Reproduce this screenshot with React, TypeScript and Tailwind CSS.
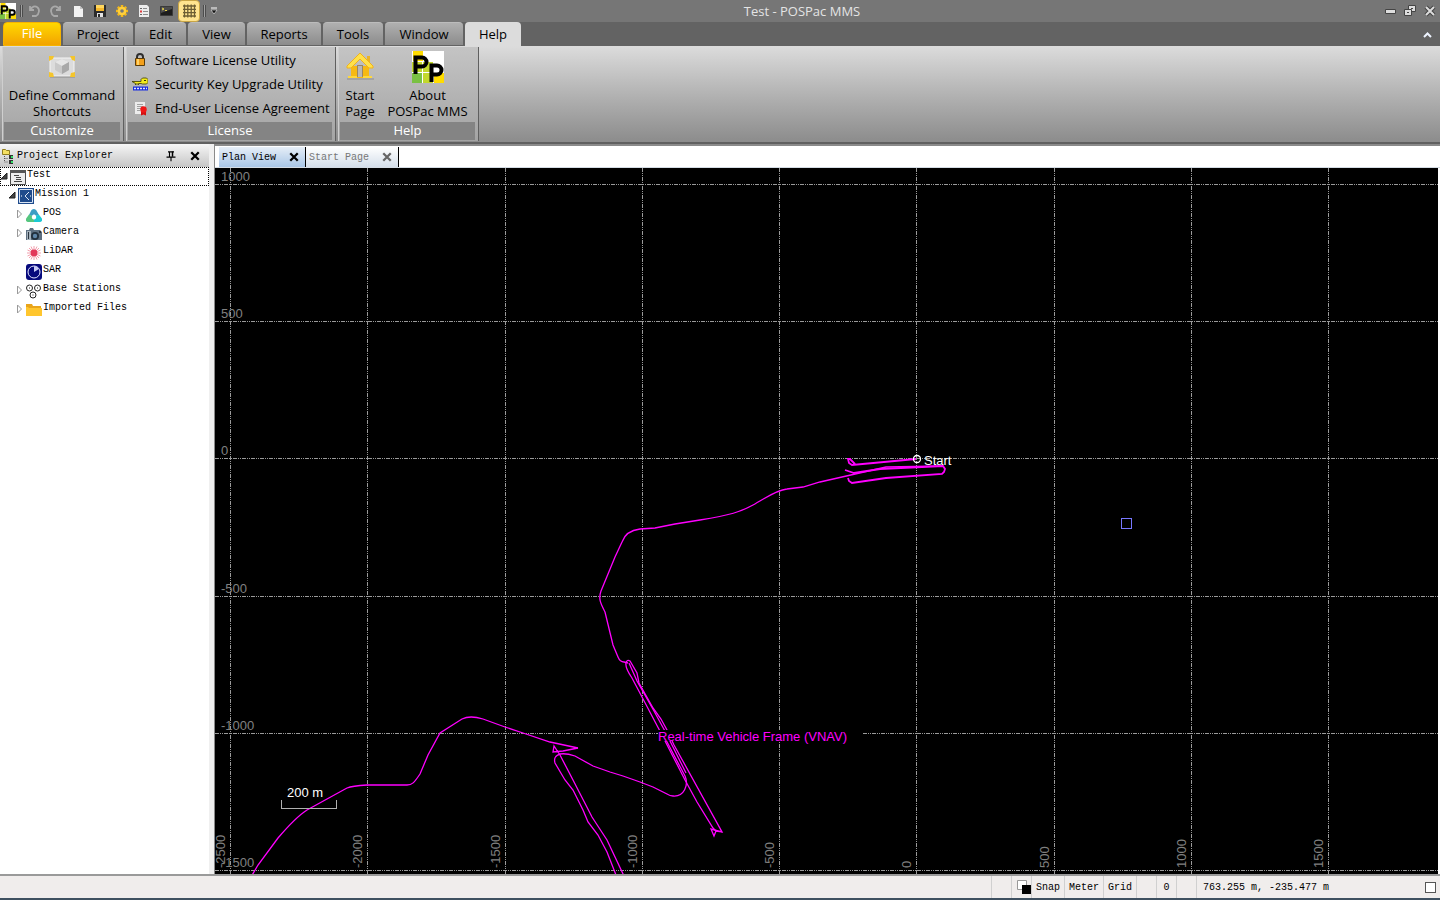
import type { ReactNode } from 'react'

const ribbonFont = "font-['Open_Sans','Noto_Sans',sans-serif]"
const monoFont = "font-['Liberation_Mono',monospace]"

const ribbonTabs = [
  { name: 'Project', width: 'w-[70px]' },
  { name: 'Edit', width: 'w-[51px]' },
  { name: 'View', width: 'w-[57px]' },
  { name: 'Reports', width: 'w-[74px]' },
  { name: 'Tools', width: 'w-[60px]' },
  { name: 'Window', width: 'w-[78px]' },
]

/* ---------- icons ---------- */

function Icon({ children, size = 16 }: { children: ReactNode; size?: number }) {
  return (
    <svg width={size} height={size} viewBox="0 0 16 16" fill="none" className="shrink-0" aria-hidden>
      {children}
    </svg>
  )
}

function LogoIcon({ size = 16 }: { size?: number }) {
  return (
    <svg width={size} height={size} viewBox="0 0 32 32" className="shrink-0" aria-hidden>
      <rect width="32" height="32" fill="#fff" />
      <path d="M1 0h10v10H1zM22 22h10v10H22z" fill="#ffdc00" />
      <path d="M0 11h10v10H0zM11 11h10v10H11zM11 22h10v10H11z" fill="#c3d82c" />
      <path d="M0 22h10v10H0z" fill="#7ac143" />
      <g fill="none" stroke="#000" strokeWidth="4">
        <path d="M3.5 23V6.5H10a4.5 4.5 0 0 1 0 9H4" />
        <path d="M19.500 31V14.500H25a4.500 4.500 0 0 1 0 9h-5" />
      </g>
    </svg>
  )
}

const UndoIcon = () => (
  <Icon>
    <path d="M4 3v4h4M4.500 6.500C6 3.500 9 2.500 11 4c3 2 2.500 7-1 9H6" stroke="#a9a9a9" strokeWidth="1.800" />
  </Icon>
)

const RedoIcon = () => (
  <Icon>
    <path d="M12 3v4H8M11.500 6.500C10 3.500 7 2.500 5 4c-3 2-2.500 7 1 9h4" stroke="#a9a9a9" strokeWidth="1.800" />
  </Icon>
)

const NewIcon = () => (
  <Icon>
    <path d="M4 3h6l3 3v8H4z" fill="#f2f2f2" />
    <path d="M10 3v3h3z" fill="#c4c4c4" />
  </Icon>
)

const SaveIcon = () => (
  <Icon>
    <path d="M2 2h12v12H2z" fill="#2b2b2b" />
    <path d="M4 2h8v6H4z" fill="#ffd75e" />
    <path d="M4 5h8v3H4z" fill="#f6b72c" />
    <path d="M5 10h6v4H5z" fill="#e4e4e4" />
    <path d="M6 11h2v3H6z" fill="#2b2b2b" />
  </Icon>
)

const GearIcon = () => (
  <Icon>
    <g stroke="#f3b81a" strokeWidth="2.500">
      <path d="M8 2v12M2 8h12M3.800 3.800l8.400 8.400M12.200 3.800l-8.400 8.400" />
    </g>
    <circle cx="8" cy="8" r="4.300" fill="#ffd03c" />
    <circle cx="8" cy="8" r="1.800" fill="#777" />
  </Icon>
)

const ReportIcon = () => (
  <Icon>
    <path d="M3 2h8l2 2v10H3z" fill="#ededed" />
    <path d="M7 5.500h4M7 8.500h5M7 11.500h5" stroke="#8c8c8c" />
    <path d="M4 5.500h2M4 11.500h2" stroke="#666" />
    <path d="M4 8.500h2" stroke="#e04040" strokeWidth="2" />
  </Icon>
)

const ConsoleIcon = () => (
  <Icon>
    <path d="M2.500 3.500h12v9h-12z" fill="#1d1d1d" stroke="#3a3a3a" />
    <path d="M3 4h11v2L3 10z" fill="#4c4c4c" />
    <path d="M4 5l2 1-2 1M7 7.500h2" stroke="#e7d34c" />
  </Icon>
)

const GridIcon = () => (
  <Icon>
    <path
      d="M3.500 1.500v13M6.800 1.500v13M10.200 1.500v13M13.500 1.500v13M2 3h13M2 6.300h13M2 9.700h13M2 13h13"
      stroke="#6d5e33"
      strokeWidth="1.300"
    />
  </Icon>
)

const ShortcutsIcon = () => (
  <svg width="32" height="32" viewBox="0 0 32 32" aria-hidden>
    <path d="M4 25.500h25" stroke="#8b8b8b" strokeWidth="2" />
    <path d="M4 7h24v18H4z" fill="#dcdcdc" stroke="#f4f4f4" />
    <path d="M16 8l7 3v8l-7 4-7-4v-8z" fill="#c9c9c9" />
    <path d="M16 8l7 3-7 4-7-4z" fill="#e6e6e6" />
    <path d="M16 15l7-4v8l-7 4z" fill="#a9a9a9" />
    <path d="M3 10V5h5l-1 3zM24 5h5v5l-3-1zM3 21l4 1 1 4H3zM29 21v5h-5l1-4z" fill="#f4c52c" />
  </svg>
)

const HomeIcon = () => (
  <svg width="32" height="32" viewBox="0 0 32 32" aria-hidden>
    <path d="M3 28h27" stroke="#8f8f8f" />
    <path d="M7 15h18v12H7z" fill="#f7b913" />
    <path d="M23 5h3v7h-3z" fill="#e9b32a" />
    <path d="M16 2L3 15v2h4l9-9 9 9h4v-2z" fill="#ffe14a" stroke="#f0b21c" />
    <path d="M13 14h6v12h-6z" fill="#9b8663" />
    <path d="M14 15h4v11h-4z" fill="#b8b8b8" />
    <path d="M4 26h9M19 26h9" stroke="#ffd83c" strokeWidth="2" />
  </svg>
)

const LockIcon = () => (
  <Icon>
    <path d="M5 8V5a3 3 0 0 1 6 0v3" stroke="#2e2e2e" strokeWidth="2" />
    <path d="M3.500 6.500h9v7h-9z" fill="#f3a01b" stroke="#5a3d0b" />
    <path d="M5 7h2v6H5z" fill="#ffd36b" />
  </Icon>
)

const KeyIcon = () => (
  <Icon>
    <path
      d="M0 5.500h9V3.500L10.500 2h4L16 3.500v3L14.500 8h-4L9 7.500H6.500V9L5 7.500 3.500 9V7.500z"
      fill="#f2ea1c"
      stroke="#3c3a00"
      strokeWidth=".8"
    />
    <path d="M12 4.500h2" stroke="#3c3a00" />
    <path d="M1 10.500h15v4H1z" fill="#1a2ee0" />
    <path d="M2 12.500h13" stroke="#dfe3ff" strokeWidth="1.500" strokeDasharray="2 1" />
  </Icon>
)

const LicenseIcon = () => (
  <Icon>
    <path d="M3 2h10v12H3z" fill="#ececec" />
    <path d="M5 4.500h6M5 6.500h6M5 8.500h4M5 10.500h3" stroke="#a2a2a2" />
    <path d="M9 11h5v4.500l-2.500-1-2.500 1z" fill="#d31010" />
    <circle cx="11.500" cy="9.500" r="3.200" fill="#f01818" />
  </Icon>
)

const ExplorerIcon = () => (
  <Icon>
    <path d="M2.500 1.500h3l1 1h3v4h-7z" fill="#f5e063" stroke="#8f7d1e" />
    <path d="M4.500 8v6H8M4.500 10.500H8" stroke="#555" strokeDasharray="1 1" />
    <path d="M9 7h4v4H9zM9 12h4v4H9z" fill="#333" />
    <path d="M11 8h2v2h-2zM11 13h2v2h-2z" fill="#35e06a" />
  </Icon>
)

const ProjectIcon = () => (
  <Icon>
    <path d="M.5 1.500h15v14H.5z" fill="#ececec" stroke="#4a4a4a" />
    <path d="M0 1h16v3H0z" fill="#555" />
    <path d="M4 6.500h5M6 8.500h5M6 10.500h5M4 12.500h8" stroke="#444" />
  </Icon>
)

const MissionIcon = () => (
  <Icon>
    <path d="M0 0h16v16H0z" fill="#1f4b8c" />
    <path d="M1.500 1.500h13v13h-13z" stroke="#dbe5f4" />
    <path d="M11 4L7 8l4 4" stroke="#dbe5f4" />
    <path d="M3 8h1M12 8h1" stroke="#fff" />
  </Icon>
)

const PosIcon = () => (
  <Icon>
    <path d="M4.500 5C5.500 1 10 1 11 4.500L13 8l-3 1c-1-2-3-2-4 0L3 8z" fill="#3c9fc4" />
    <path d="M3 7.500L6 9c-.5 2 0 3 2 3.500V15H3c-3 0-4-2-2.500-4z" fill="#56c67f" />
    <path d="M12.800 7.500L10 9c.5 2 0 3-2 3.500V15h5c3 0 4-2 2.500-4z" fill="#1cc8d4" />
  </Icon>
)

const CameraIcon = () => (
  <Icon>
    <path d="M0 4h3l1-2h3l1 2h6l2 2v8H0z" fill="#5d6f80" />
    <path d="M1 5h4v9H1z" fill="#a6b2bc" />
    <path d="M2 6h1v7H2zM13 5h2v2h-2z" fill="#2b3640" />
    <circle cx="9" cy="10" r="4" fill="#22303d" />
    <circle cx="9" cy="10" r="2.200" fill="#5f86a8" />
  </Icon>
)

const LidarIcon = () => (
  <Icon>
    <path
      d="M8 1v14M1 8h14M3 3l10 10M13 3L3 13M5 1.500l6 13M11 1.500l-6 13M1.500 5l13 6M14.500 5l-13 6"
      stroke="#f2a0ae"
    />
    <circle cx="8" cy="8" r="3.400" fill="#e2385a" />
  </Icon>
)

const SarIcon = () => (
  <Icon>
    <rect width="16" height="16" rx="3" fill="#070a7c" />
    <circle cx="8" cy="8" r="6" stroke="#e4e6ff" />
    <path d="M8 8V2a6 6 0 0 1 5 3z" fill="#c7cbf5" />
  </Icon>
)

const StationsIcon = () => (
  <Icon>
    <g stroke="#222">
      <circle cx="3.500" cy="5" r="3" />
      <circle cx="11.500" cy="5" r="3" />
      <circle cx="7" cy="12" r="3" />
    </g>
    <path d="M3 4.500h1v1H3zM11 4.500h1v1h-1zM6.500 11.500h1v1h-1z" fill="#222" />
  </Icon>
)

const FolderIcon = () => (
  <Icon>
    <path d="M0 2h6l1 2h8v2H0z" fill="#e9a51b" />
    <path d="M0 5h2l1 1h13v8H0z" fill="#ffc62e" />
  </Icon>
)

const PinIcon = () => (
  <Icon size={12}>
    <path d="M4 2.500h8M6 2v7M2 9.500h12M8 10v5" stroke="#000" strokeWidth="1.500" />
    <path d="M9 2h2v7H9z" fill="#000" />
  </Icon>
)

const CloseIcon = ({ color = '#000' }: { color?: string }) => (
  <Icon size={12}>
    <path d="M3 3l10 10M13 3L3 13" stroke={color} strokeWidth="3" />
  </Icon>
)

/* ---------- title bar and ribbon ---------- */

function QuickAccess() {
  const tools = [
    { name: 'Undo', icon: <UndoIcon /> },
    { name: 'Redo', icon: <RedoIcon /> },
    { name: 'New', icon: <NewIcon /> },
    { name: 'Save', icon: <SaveIcon /> },
    { name: 'Options', icon: <GearIcon /> },
    { name: 'Report', icon: <ReportIcon /> },
    { name: 'Console', icon: <ConsoleIcon /> },
  ]

  return (
    <div className="flex w-[224px] items-center">
      <LogoIcon />
      <span className="ml-1 h-3 w-[3px] border-x border-x-[#4c4c4c] bg-[#a0a0a0]" />
      <div className="ml-[3px] flex items-center gap-[6px]">
        {tools.map((t) => (
          <button key={t.name} aria-label={t.name}>{t.icon}</button>
        ))}
      </div>
      <button
        aria-label="Grid"
        className="ml-1 flex h-[22px] w-[22px] items-center justify-center rounded-sm border border-[#c9a545] bg-[#ffe48f]"
      >
        <GridIcon />
      </button>
      <span className="ml-[3px] h-3 w-[3px] border-x border-x-[#4c4c4c] bg-[#a0a0a0]" />
      <button aria-label="Customize toolbar" className="ml-1">
        <svg width="8" height="8" viewBox="0 0 8 8" aria-hidden>
          <path d="M1 1h6" stroke="#fff" />
          <path d="M1 3h6L4 7z" fill="#111" stroke="#eee" strokeWidth=".6" />
        </svg>
      </button>
    </div>
  )
}

function TitleBar() {
  return (
    <header className="flex h-[22px] items-center bg-[#767676]">
      <QuickAccess />
      <h1 className="flex-1 text-center text-[13px] leading-5 text-[#e4e4e4]">Test - POSPac MMS</h1>
      <div className="flex w-[60px] items-center justify-end gap-2 pr-1">
        <button aria-label="Minimize">
          <svg width="11" height="12" viewBox="0 0 11 12" aria-hidden>
            <path d="M.5 4.500h10v4H.5z" fill="#ddd" stroke="#444" />
          </svg>
        </button>
        <button aria-label="Restore">
          <svg width="12" height="12" viewBox="0 0 12 12" aria-hidden>
            <path d="M4.500.5h7v6h-7z" fill="#ddd" stroke="#444" />
            <path d="M7 3h2v1H7z" fill="#444" />
            <path d="M.5 4.500h7v6h-7z" fill="#ddd" stroke="#444" />
            <path d="M3 7h2v1H3z" fill="#444" />
          </svg>
        </button>
        <button aria-label="Close">
          <svg width="12" height="12" viewBox="0 0 12 12" aria-hidden>
            <path d="M2 2l8 8M10 2l-8 8" stroke="#444" strokeWidth="4" />
            <path d="M2 2l8 8M10 2l-8 8" stroke="#ddd" strokeWidth="2" />
          </svg>
        </button>
      </div>
    </header>
  )
}

function RibbonTabs() {
  return (
    <nav className="flex h-6 items-stretch gap-[2px] bg-[#636363] pl-[3px] text-[13px] text-black">
      <button className="w-[58px] rounded-t-sm border border-[#f6b400] bg-gradient-to-b from-[#ffd800] to-[#f2a300] text-white">
        File
      </button>
      {ribbonTabs.map((t) => (
        <button
          key={t.name}
          className={`${t.width} mb-px rounded-t-sm border-t border-[#bcbcbc] bg-gradient-to-b from-[#b0b0b0] to-[#8c8c8c] pt-px`}
        >
          {t.name}
        </button>
      ))}
      <button className="w-[56px] rounded-t-sm bg-[#dcdcdc] pt-px">Help</button>
      <button aria-label="Collapse ribbon" className="mr-2 ml-auto">
        <svg width="9" height="9" viewBox="0 0 9 9" fill="none" aria-hidden>
          <path d="M1 7l3.500-3.500L8 7" stroke="#eef4ff" strokeWidth="2" />
        </svg>
      </button>
    </nav>
  )
}

function RibbonGroup({ title, width, children }: { title: string; width: string; children: ReactNode }) {
  return (
    <section
      className={`${width} mr-[2px] flex flex-col border-x border-r-[#5f5f5f] border-l-[#cfcfcf] bg-gradient-to-b from-[#c4c4c4] via-[#b4b4b4] to-[#a4a4a4] pr-[3px] pb-px pl-px`}
    >
      <div className="flex flex-1">{children}</div>
      <h2 className="h-[18px] bg-[#848484] text-center leading-[17px] text-white">{title}</h2>
    </section>
  )
}

function Ribbon() {
  const licenseItems = [
    { name: 'Software License Utility', icon: <LockIcon /> },
    { name: 'Security Key Upgrade Utility', icon: <KeyIcon /> },
    { name: 'End-User License Agreement', icon: <LicenseIcon /> },
  ]

  return (
    <div className="flex h-[98px] border-b-2 border-b-[#606060] bg-gradient-to-b from-[#dcdcdc] to-[#8c8c8c] pt-px pb-px pl-[2px] text-[13px] leading-4 text-black">
      <RibbonGroup title="Customize" width="w-[122px]">
        <button className="flex flex-1 flex-col items-center pt-1">
          <ShortcutsIcon />
          <span className="pt-1">
            Define Command
            <br />
            Shortcuts
          </span>
        </button>
      </RibbonGroup>
      <RibbonGroup title="License" width="w-[210px]">
        <div className="flex flex-1 flex-col pt-px pl-1">
          {licenseItems.map((item) => (
            <button key={item.name} className="flex h-6 items-center gap-[7px] whitespace-nowrap">
              {item.icon}
              {item.name}
            </button>
          ))}
        </div>
      </RibbonGroup>
      <RibbonGroup title="Help" width="w-[141px]">
        <button className="flex w-10 flex-col items-center pt-1">
          <HomeIcon />
          <span className="pt-1">
            Start
            <br />
            Page
          </span>
        </button>
        <button className="flex flex-1 flex-col items-center whitespace-nowrap pt-1">
          <LogoIcon size={32} />
          <span className="pt-1">
            About
            <br />
            POSPac MMS
          </span>
        </button>
      </RibbonGroup>
    </div>
  )
}

/* ---------- project explorer ---------- */

type TreeRow = { name: string; indent: string; icon: ReactNode; arrow?: 'open' | 'closed' }

const treeRows: TreeRow[] = [
  { name: 'Test', indent: 'pl-0', icon: <ProjectIcon />, arrow: 'open' },
  { name: 'Mission 1', indent: 'pl-2', icon: <MissionIcon />, arrow: 'open' },
  { name: 'POS', indent: 'pl-4', icon: <PosIcon />, arrow: 'closed' },
  { name: 'Camera', indent: 'pl-4', icon: <CameraIcon />, arrow: 'closed' },
  { name: 'LiDAR', indent: 'pl-4', icon: <LidarIcon /> },
  { name: 'SAR', indent: 'pl-4', icon: <SarIcon /> },
  { name: 'Base Stations', indent: 'pl-4', icon: <StationsIcon />, arrow: 'closed' },
  { name: 'Imported Files', indent: 'pl-4', icon: <FolderIcon />, arrow: 'closed' },
]

function TreeArrow({ state }: { state?: 'open' | 'closed' }) {
  return (
    <svg width="10" height="10" viewBox="0 0 10 10" fill="none" className="shrink-0" aria-hidden>
      {state === 'open' && <path d="M7 2v6H1z" fill="#444" stroke="#222" />}
      {state === 'closed' && <path d="M1.500 1l4 4-4 4z" stroke="#999" />}
    </svg>
  )
}

function ProjectExplorer() {
  return (
    <aside className="w-[209px] shrink-0 bg-white">
      <div className="flex h-[23px] items-center bg-gradient-to-b from-[#f6f6f6] to-[#c6c6c6] pr-2 text-[10px]">
        <ExplorerIcon />
        <h2 className="ml-px flex-1">Project Explorer</h2>
        <button aria-label="Auto hide" className="mr-3"><PinIcon /></button>
        <button aria-label="Close panel"><CloseIcon /></button>
      </div>
      <ul className="text-[10px] leading-4">
        {treeRows.map((row, i) => (
          <li
            key={row.name}
            className={`${row.indent} flex h-[19px] items-start ${i === 0 ? 'outline-1 -outline-offset-1 outline-dotted outline-black' : ''}`}
          >
            <span className="pt-1"><TreeArrow state={row.arrow} /></span>
            <span className="pt-[2px]">{row.icon}</span>
            <span className="pl-px">{row.name}</span>
          </li>
        ))}
      </ul>
    </aside>
  )
}

/* ---------- plan view ---------- */

const xTicks = [
  { x: 15, label: '-2500' },
  { x: 152, label: '-2000' },
  { x: 290, label: '-1500' },
  { x: 427, label: '-1000' },
  { x: 564, label: '-500' },
  { x: 701, label: '0' },
  { x: 839, label: '500' },
  { x: 976, label: '1000' },
  { x: 1113, label: '1500' },
]

const yTicks = [
  { y: 16, label: '1000' },
  { y: 153, label: '500' },
  { y: 290, label: '0' },
  { y: 428, label: '-500' },
  { y: 565, label: '-1000' },
  { y: 702, label: '-1500' },
]

// Vehicle track, in pixels from the start point
const startLoops = [
  'M0 1L-64 7L-67 5L-68 1L-66 1L-61 6',
  'M-71 12L-68 13L-62 15L-36 11L27 8L29 11L28 14L26 16L-30 20L-64 25L-67 23L-68 20',
]

const trackPaths = [
  // start down to the first survey line
  'M27 8L-30 9L-52 14L-96 24L-113 29L-129 31C-140 32 -150 40 -163 47S-185 57 -216 62L-241 66L-261 70L-276 71C-284 72 -291 75 -294 84L-301 99L-315 133C-318 141 -315 146 -311 154L-303 187L-298 199Q-296 204 -292 204L-288 205',
  // first survey line
  'M-290 205Q-289 201 -286 203L-279 215L-277 225L-263 250L-255 261L-249 272L-242 287L-194 374L-200 373L-202 378L-205 371L-194 374',
  'M-290 205Q-291 210 -284 220L-254 277L-231 322L-219 344L-203 370L-200 373M-287 205L-279 223L-262 253L-250 275L-230 315',
  // turn to the second survey line
  'M-250 282L-231 318C-227 327 -232 339 -243 338Q-246 338 -249 336L-263 329L-276 324L-293 318L-306 314L-323 308L-341 298Q-350 295 -356 296Q-363 298 -361 305L-351 322L-343 332L-333 352L-328 364L-318 377L-309 394L-300 417',
  'M-292 418L-309 382L-324 359L-343 322L-356 297L-362 288L-363 294L-353 293L-338 290',
  // run out to the south-west
  'M-338 290L-366 284L-393 275L-411 269L-433 261Q-446 257 -454 261L-476 275L-488 297L-496 316C-502 325 -504 327 -509 327L-549 327Q-564 328 -569 330L-589 341L-609 352Q-620 359 -638 380L-658 407L-665 419',
]

function PlanView() {
  return (
    <div className="mr-[2px] min-h-0 flex-1 overflow-hidden bg-black">
      <svg
        className="h-full w-full font-['Liberation_Sans',Arial,sans-serif] text-[13px]"
        role="img"
        aria-label="Plan view of the vehicle track"
      >
        <g stroke="#9a9a9a" strokeDasharray="4 1 1 1 1 1" shapeRendering="crispEdges">
          {xTicks.map((t) => (
            <line key={t.x} x1={t.x} y1="0" x2={t.x} y2="100%" />
          ))}
          {yTicks.map((t) => (
            <line key={t.y} x1="0" y1={t.y} x2="100%" y2={t.y} />
          ))}
        </g>
        <g fill="#808080">
          {yTicks.map((t) => (
            <text key={t.y} x="6" y={t.y - 3}>{t.label}</text>
          ))}
          {xTicks.map((t) => (
            <text key={t.x} transform={`translate(${t.x - 5} 700) rotate(-90)`}>{t.label}</text>
          ))}
        </g>

        <g transform="translate(701 290)" fill="none">
          {trackPaths.map((d) => (
            <path key={d} d={d} stroke="#f0f" strokeWidth="1.300" />
          ))}
          {startLoops.map((d) => (
            <path key={d} d={d} stroke="#f0f" strokeWidth="1.800" />
          ))}
          <circle cx="1" cy="1" r="3.500" stroke="#fff" strokeWidth="1.300" />
          <text x="8" y="7" fill="#fff">Start</text>
          <rect x="205" y="60" width="10" height="10" stroke="#7878ff" shapeRendering="crispEdges" />
          <rect x="-258" y="272" width="204" height="11" fill="#000" />
          <text x="-258" y="283" fill="#f0f">Real-time Vehicle Frame (VNAV)</text>
        </g>

        <path d="M66 632v8h55v-8" fill="none" stroke="#b0b0b0" shapeRendering="crispEdges" />
        <text x="72" y="629" fill="#fff">200 m</text>
      </svg>
    </div>
  )
}

function Workspace() {
  return (
    <main className="flex min-w-0 flex-1 flex-col border-t-2 border-l border-[#8a8a8a] bg-white">
      <div className="flex h-[22px] shrink-0 items-end border-b border-b-[#d4dce4] pl-1 text-[10px]">
        <div className="flex h-5 w-[87px] items-center justify-between border-r border-r-black bg-gradient-to-b from-[#e6eef7] to-[#a9c6e6] pr-[5px] pl-[3px]">
          <button>Plan View</button>
          <button aria-label="Close Plan View"><CloseIcon /></button>
        </div>
        <div className="flex h-5 w-[93px] items-center justify-between border-r border-r-black bg-gradient-to-b from-white to-[#d5dfea] pr-[5px] pl-[3px] text-[#777]">
          <button>Start Page</button>
          <button aria-label="Close Start Page"><CloseIcon color="#666" /></button>
        </div>
      </div>
      <PlanView />
    </main>
  )
}

/* ---------- status bar ---------- */

function StatusCell({ width, children }: { width: string; children?: ReactNode }) {
  return (
    <div className={`${width} flex h-full items-center justify-center border-l border-l-[#d0d0d0]`}>{children}</div>
  )
}

function StatusBar() {
  return (
    <footer className="flex h-[26px] shrink-0 items-center border-t-2 border-b-2 border-t-[#9a9a9a] border-b-[#3e5060] bg-[#f0edec] text-[10px]">
      <div className="flex-1" />
      <StatusCell width="w-5" />
      <StatusCell width="w-5">
        <svg width="14" height="14" viewBox="0 0 14 14" className="ml-1" aria-hidden>
          <path d="M.5.5h9v9h-9z" fill="#fff" stroke="#999" />
          <path d="M5 5h9v9H5z" fill="#000" />
        </svg>
      </StatusCell>
      <StatusCell width="w-[33px]"><button>Snap</button></StatusCell>
      <StatusCell width="w-[39px]"><button>Meter</button></StatusCell>
      <StatusCell width="w-[33px]"><button>Grid</button></StatusCell>
      <StatusCell width="w-5" />
      <StatusCell width="w-5">0</StatusCell>
      <StatusCell width="w-5" />
      <div className="flex h-full w-[244px] items-center justify-between border-l border-l-[#d0d0d0] pr-1 pl-[6px]">
        <span>763.255 m, -235.477 m</span>
        <span className="h-[11px] w-[11px] border border-[#555] bg-white" />
      </div>
    </footer>
  )
}

export default function App() {
  return (
    <div className="flex h-screen flex-col overflow-hidden bg-[#f0f0f0]">
      <div className={ribbonFont}>
        <TitleBar />
        <RibbonTabs />
        <Ribbon />
      </div>
      <div className={`${monoFont} flex min-h-0 flex-1 text-black`}>
        <ProjectExplorer />
        <div className="w-[5px] shrink-0" />
        <Workspace />
      </div>
      <div className={monoFont}>
        <StatusBar />
      </div>
    </div>
  )
}
